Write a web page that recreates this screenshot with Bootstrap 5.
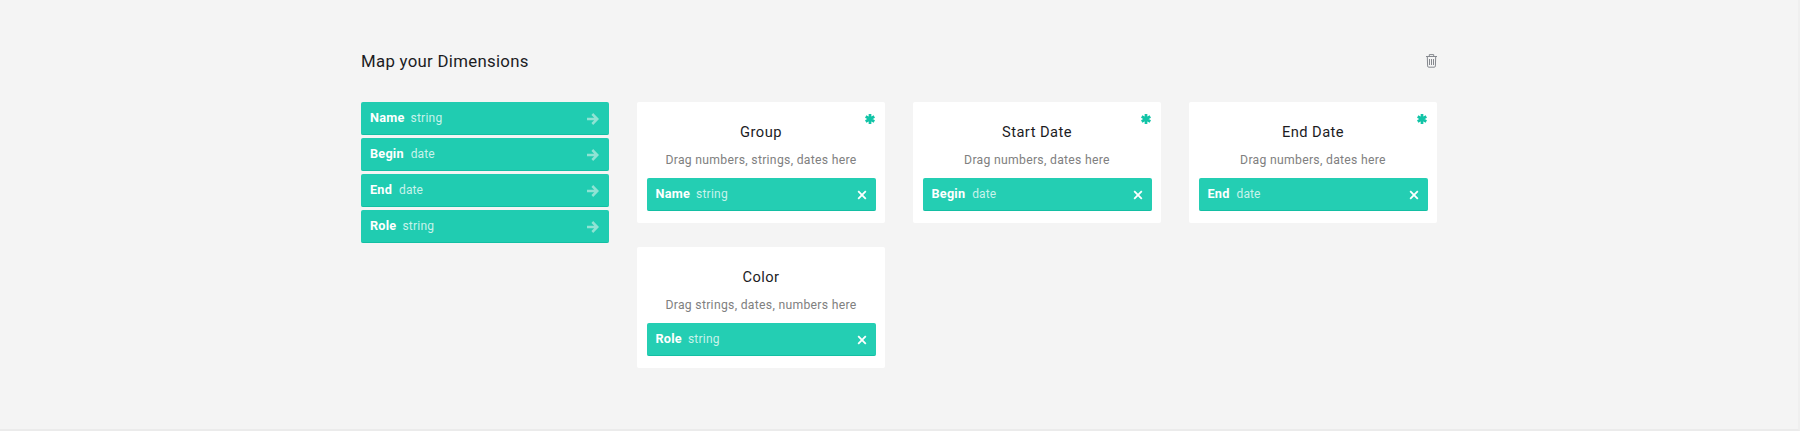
<!DOCTYPE html>
<html lang="en">
<head>
<meta charset="utf-8">
<meta name="viewport" content="width=device-width, initial-scale=1">
<title>Map your Dimensions</title>
<link href="https://cdn.jsdelivr.net/npm/bootstrap@5.3.0/dist/css/bootstrap.min.css" rel="stylesheet">
<style>
body{background:#f4f4f4;font-family:Roboto,"Liberation Sans",sans-serif;color:#1c1c1f;overflow:hidden}
.page{height:431px;border-bottom:2px solid #ebebeb;border-right:2px solid #efefef;padding:48px 0 0 361px}
.mapper{width:1076px}
.title{font-size:16.8px;font-weight:400;line-height:26px;letter-spacing:.3px;margin:0}
.trash{margin-top:6px}
.board{display:grid;grid-template-columns:repeat(4,248px);column-gap:28px;row-gap:24px;align-items:start;margin-top:28px}
.sources{grid-row:span 2;gap:3px}
.dim{height:33px;padding:0 9px;background:#20ccb1;border-bottom:1px solid #13bfa3;border-radius:2px;color:#fff;line-height:32px}
.dim b{font-size:12.7px;font-weight:700;letter-spacing:.22px}
.dim span{font-size:12px;margin-left:6px;letter-spacing:.25px;color:#c8f3eb}
.dim .kind-date{margin-left:7px;letter-spacing:.05px}
.dim svg{margin:2px 1px 0 0}
.target{height:121px;padding:20px 9.5px 0;background:#fff;border-radius:2px;text-align:center}
.target h3{font-size:14.7px;line-height:20px;letter-spacing:.45px;font-weight:400;margin:0 0 9px}
.target p{font-size:12.2px;line-height:18px;letter-spacing:.3px;color:#808080;margin:0 0 9px}
.target .dim{background:#24ceb3}
.target .dim svg{margin-right:0}
.star{top:12px;right:10px}
</style>
<script src="https://cdn.jsdelivr.net/npm/bootstrap@5.3.0/dist/js/bootstrap.bundle.min.js"></script>
</head>
<body>
<svg class="d-none">
<symbol id="arrow" viewBox="0 0 12 12"><path d="M0 6h10M5.3 1 10.3 6l-5 5" fill="none" stroke="#8fe3d4" stroke-width="2.5"/></symbol>
<symbol id="close" viewBox="0 0 10 10"><path d="m1.2 1.2 7.6 7.6m0-7.6L1.2 8.8" fill="none" stroke="#fff" stroke-width="1.8"/></symbol>
<symbol id="star" viewBox="0 0 10 10"><path d="M5 0v10M.7 2.5l8.6 5M.7 7.5l8.6-5" fill="none" stroke="#12c4a7" stroke-width="2.7"/></symbol>
</svg>
<main class="page">
<div class="mapper">
<header class="d-flex justify-content-between">
<h2 class="title">Map your Dimensions</h2>
<svg class="trash" width="11" height="14" viewBox="0 0 11 14" fill="none" stroke="#85888e"><path d="M0 2.5h11M3.3 2.2V.6h4.4v1.6M1.3 2.7l.3 9.2q0 1.3 1.2 1.3h5.4q1.2 0 1.2-1.3l.3-9.2M3.5 5v6M5.5 5v6M7.5 5v6"/></svg>
</header>
<div class="board">
<div class="sources d-flex flex-column">
<div class="dim d-flex align-items-baseline"><b>Name</b><span>string</span><svg class="ms-auto align-self-center" width="12" height="12"><use href="#arrow"/></svg></div>
<div class="dim d-flex align-items-baseline"><b>Begin</b><span class="kind-date">date</span><svg class="ms-auto align-self-center" width="12" height="12"><use href="#arrow"/></svg></div>
<div class="dim d-flex align-items-baseline"><b>End</b><span class="kind-date">date</span><svg class="ms-auto align-self-center" width="12" height="12"><use href="#arrow"/></svg></div>
<div class="dim d-flex align-items-baseline"><b>Role</b><span>string</span><svg class="ms-auto align-self-center" width="12" height="12"><use href="#arrow"/></svg></div>
</div>
<section class="target position-relative">
<svg class="star position-absolute" width="10" height="10"><use href="#star"/></svg>
<h3>Group</h3><p>Drag numbers, strings, dates here</p>
<div class="dim d-flex align-items-baseline"><b>Name</b><span>string</span><svg class="ms-auto align-self-center" width="10" height="10"><use href="#close"/></svg></div>
</section>
<section class="target position-relative">
<svg class="star position-absolute" width="10" height="10"><use href="#star"/></svg>
<h3>Start Date</h3><p>Drag numbers, dates here</p>
<div class="dim d-flex align-items-baseline"><b>Begin</b><span class="kind-date">date</span><svg class="ms-auto align-self-center" width="10" height="10"><use href="#close"/></svg></div>
</section>
<section class="target position-relative">
<svg class="star position-absolute" width="10" height="10"><use href="#star"/></svg>
<h3>End Date</h3><p>Drag numbers, dates here</p>
<div class="dim d-flex align-items-baseline"><b>End</b><span class="kind-date">date</span><svg class="ms-auto align-self-center" width="10" height="10"><use href="#close"/></svg></div>
</section>
<section class="target">
<h3>Color</h3><p>Drag strings, dates, numbers here</p>
<div class="dim d-flex align-items-baseline"><b>Role</b><span>string</span><svg class="ms-auto align-self-center" width="10" height="10"><use href="#close"/></svg></div>
</section>
</div>
</div>
</main>
</body>
</html>
